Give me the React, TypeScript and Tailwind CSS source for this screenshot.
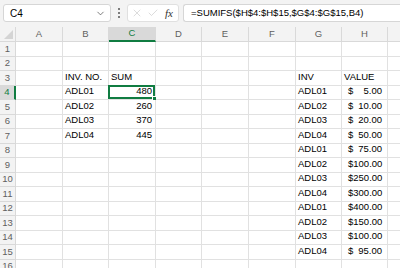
import { ChevronDown, X, Check } from 'lucide-react';
import clsx from 'clsx';

const cols = ['A', 'B', 'C', 'D', 'E', 'F', 'G', 'H', 'I'];
const colWidth = ['w-[47px]', 'w-[46px]', 'w-[47px]', 'w-[46px]', 'w-[47px]', 'w-[47px]', 'w-[46px]', 'w-[46px]', 'w-[46px]'];

const sums: Record<number, [string, string]> = {
  3: ['INV. NO.', 'SUM'],
  4: ['ADL01', '480'],
  5: ['ADL02', '260'],
  6: ['ADL03', '370'],
  7: ['ADL04', '445'],
};

const values: Record<number, [string, string]> = {
  4: ['ADL01', '5.00'],
  5: ['ADL02', '10.00'],
  6: ['ADL03', '20.00'],
  7: ['ADL04', '50.00'],
  8: ['ADL01', '75.00'],
  9: ['ADL02', '100.00'],
  10: ['ADL03', '250.00'],
  11: ['ADL04', '300.00'],
  12: ['ADL01', '400.00'],
  13: ['ADL02', '150.00'],
  14: ['ADL03', '100.00'],
  15: ['ADL04', '95.00'],
};

function Cell({ row, col }: { row: number; col: number }) {
  const name = cols[col];
  let content: React.ReactNode = null;

  if (name === 'B' && sums[row]) {
    content = <span className="pl-[2px]">{sums[row][0]}</span>;
  } else if (name === 'C' && sums[row]) {
    content = row === 3
      ? <span className="pl-[2px]">{sums[row][1]}</span>
      : <span className="ml-auto pr-[3px]">{sums[row][1]}</span>;
  } else if (name === 'G') {
    if (row === 3) content = <span className="pl-[2px]">INV</span>;
    else if (values[row]) content = <span className="pl-[2px]">{values[row][0]}</span>;
  } else if (name === 'H') {
    if (row === 3) content = <span className="pl-[2px]">VALUE</span>;
    else if (values[row]) content = (
      <div className="flex w-full pl-[6px] pr-[5px]">
        <span>$</span>
        <span className="ml-auto">{values[row][1]}</span>
      </div>
    );
  }

  return (
    <div className={clsx('relative flex items-end pb-[1px] h-full shrink-0 border-r border-b border-[#e1e1e1]', colWidth[col])}>
      {content}
      {name === 'C' && row === 4 && (
        <div className="absolute -left-[1px] -top-[1px] -right-[0px] -bottom-[0px] border-2 border-[#107c41]">
          <div className="absolute -right-[4px] -bottom-[4px] w-[5px] h-[5px] bg-[#107c41] border border-white" />
        </div>
      )}
    </div>
  );
}

export default function App() {
  const rows = Array.from({ length: 16 }, (_, i) => i + 1);

  return (
    <div className="w-[400px] h-[268px] overflow-hidden bg-white text-[9.5px] text-black" style={{ fontFamily: '"Liberation Sans", Arial, sans-serif' }}>
      {/* Formula bar */}
      <div className="flex items-center h-[27px] bg-[#f3f3f3] pl-[3px] pb-[1px]">
        <div className="flex items-center w-[108px] h-[18px] bg-white border border-[#d6d6d6] rounded-[3px] pl-[6px] pr-[4px] text-[10px]">
          <span>C4</span>
          <ChevronDown size={11} className="ml-auto text-[#444]" strokeWidth={1.5} />
        </div>
        <div className="flex flex-col gap-[2px] mx-[7px]">
          <div className="w-[2px] h-[2px] bg-[#555] rounded-full" />
          <div className="w-[2px] h-[2px] bg-[#555] rounded-full" />
          <div className="w-[2px] h-[2px] bg-[#555] rounded-full" />
        </div>
        <div className="flex items-center w-[52px] h-[18px] bg-white border border-[#e0e0e0] rounded-[3px] pl-[3px]">
          <X size={12} className="text-[#c4c4c4]" strokeWidth={1.2} />
          <Check size={12} className="ml-[4px] text-[#c4c4c4]" strokeWidth={1.2} />
          <span className="ml-[6px] text-[11px] italic text-[#333]" style={{ fontFamily: '"Liberation Serif", serif' }}>fx</span>
        </div>
        <div className="flex items-center ml-[4px] flex-1 h-[18px] bg-white border border-[#d6d6d6] rounded-l-[3px] border-r-0 pl-[7px] text-[9.5px]">
          =SUMIFS($H$4:$H$15,$G$4:$G$15,B4)
        </div>
      </div>

      {/* Column headers */}
      <div className="flex h-[15px] bg-[#f3f3f3] text-[#5f5f5f]">
        <div className="relative w-[16px] shrink-0 border-r border-b border-[#d9d9d9]">
          <div className="absolute right-[2px] bottom-[2px] w-0 h-0 border-l-[9px] border-l-transparent border-b-[9px] border-b-[#d4d4d4]" />
        </div>
        {cols.map((c, i) => (
          <div
            key={c}
            className={clsx(
              'flex items-center justify-center shrink-0 border-r border-[#d9d9d9]',
              colWidth[i],
              c === 'C' ? 'bg-[#d9d9d9] text-[#107c41] border-b-2 border-b-[#107c41]' : 'border-b'
            )}
          >
            {c}
          </div>
        ))}
      </div>

      {/* Grid */}
      {rows.map((r) => (
        <div key={r} className={clsx('flex', r % 2 === 1 ? 'h-[15px]' : 'h-[14px]')}>
          <div
            className={clsx(
              'flex items-center justify-center w-[16px] shrink-0 border-b border-[#d9d9d9]',
              r === 4 ? 'bg-[#d9d9d9] text-[#107c41] border-r-2 border-r-[#107c41]' : 'bg-[#f3f3f3] text-[#5f5f5f] border-r'
            )}
          >
            {r}
          </div>
          {cols.map((c, i) => (
            <Cell key={c} row={r} col={i} />
          ))}
        </div>
      ))}
    </div>
  );
}
